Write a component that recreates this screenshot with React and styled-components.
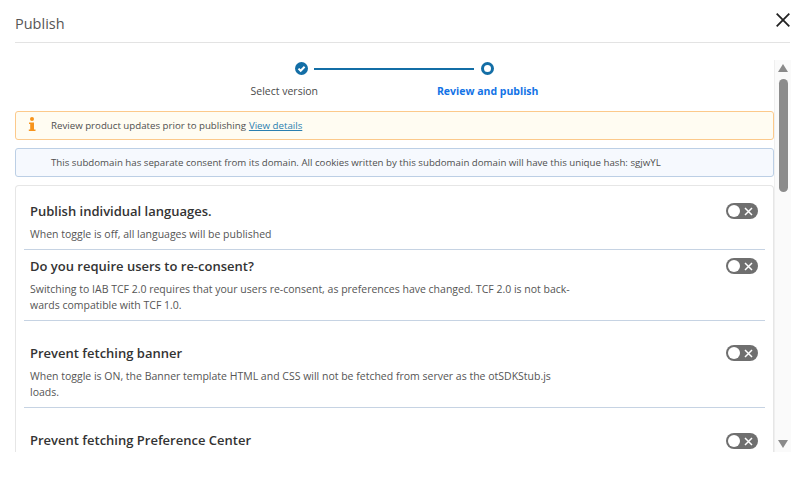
import React from "react";
import styled, { createGlobalStyle } from "styled-components";

const GlobalStyle = createGlobalStyle`
  html, body {
    margin: 0;
    padding: 0;
    background: #fff;
    font-family: "Open Sans", "Noto Sans", sans-serif;
    color: #4a4a4a;
  }
`;

const Modal = styled.div`
  width: 800px;
  height: 482px;
  box-sizing: border-box;
  padding: 0 10px 30px 15px;
  overflow: hidden;
`;

const Header = styled.header`
  height: 42px;
  display: flex;
  align-items: center;
  justify-content: space-between;
  border-bottom: 1px solid #e3e3e3;
`;

const Title = styled.h1`
  margin: 5px 0 0;
  font-size: 14.5px;
  font-weight: 400;
  color: #565656;
`;

const CloseButton = styled.button`
  border: 0;
  background: none;
  padding: 0;
  margin: 0 0 2px;
  width: 14px;
  height: 14px;
  display: block;
  color: #222;

  svg {
    display: block;
  }
`;

const Body = styled.div`
  display: flex;
  height: 409px;
`;

const Content = styled.div`
  width: 759px;
  flex: none;
  overflow: hidden;
`;

const Stepper = styled.div`
  height: 68px;
  display: flex;
  flex-direction: column;
  align-items: center;
`;

const Track = styled.div`
  display: flex;
  align-items: center;
  gap: 6.5px;
  margin: 19px 1px 0 0;
`;

const Dot = styled.span`
  width: 13px;
  height: 13px;
  flex: none;
  border-radius: 50%;
  box-sizing: border-box;
  display: block;
  background: ${(p) => (p.$done ? "#136ea6" : "#fff")};
  border: ${(p) => (p.$done ? "0" : "3px solid #136ea6")};

  svg {
    display: block;
  }
`;

const Line = styled.span`
  width: 160px;
  height: 2px;
  background: #136ea6;
`;

const StepLabels = styled.div`
  display: flex;
  width: 288px;
  justify-content: space-between;
  margin: 9px 0 0;
`;

const StepLabel = styled.span`
  font-size: 10.5px;
  line-height: 15px;
  font-weight: ${(p) => (p.$active ? 700 : 400)};
  color: ${(p) => (p.$active ? "#1273e6" : "#4a4a4a")};
`;

const Banner = styled.div`
  height: 29px;
  box-sizing: border-box;
  margin-bottom: 8px;
  border-radius: 3px;
  display: flex;
  align-items: center;
  position: relative;
  padding-left: 35px;
  font-size: 9.7px;
  color: #4f4f4f;
  border: 1px solid ${(p) => (p.$tone === "warn" ? "#fcc98b" : "#bccfe5")};
  background: ${(p) => (p.$tone === "warn" ? "#fffcf2" : "#f6f9fe")};
`;

const InfoIcon = styled.svg`
  position: absolute;
  left: 12px;
  top: 5px;
`;

const DetailsLink = styled.a`
  color: #2b7fb0;
  text-decoration: underline;
  margin-left: 3px;
`;

const Card = styled.section`
  border: 1px solid #e6e6e6;
  border-bottom: 0;
  border-radius: 4px 4px 0 0;
  padding: 0 8px;
  width: 759px;
  box-sizing: border-box;
  height: 267px;
  overflow: hidden;
`;

const Row = styled.div`
  display: flex;
  justify-content: space-between;
  align-items: flex-start;
  box-sizing: border-box;
  height: ${(p) => p.$height}px;
  padding: ${(p) => p.$top}px 7px 0 6px;
  border-bottom: ${(p) => (p.$last ? "0" : "1px solid #c6d3e3")};
`;

const RowText = styled.div`
  width: 545px;
`;

const RowTitle = styled.h2`
  margin: 0;
  font-size: 13px;
  line-height: 18px;
  font-weight: 600;
  color: #333;
`;

const RowDesc = styled.p`
  margin: 6px 0 0;
  font-size: 10.5px;
  line-height: 16px;
  color: #555;
`;

const Toggle = styled.span`
  width: 32px;
  height: 16px;
  flex: none;
  border-radius: 8px;
  background: #6f6f6f;
  display: flex;
  align-items: center;
  justify-content: space-between;
  padding: 0 5px 0 2px;
  box-sizing: border-box;
  margin-top: ${(p) => (p.$low ? "2px" : "1px")};
`;

const Knob = styled.span`
  width: 12px;
  height: 12px;
  border-radius: 50%;
  background: #fff;
`;

const Rail = styled.div`
  width: 17px;
  flex: none;
  box-sizing: border-box;
  margin-top: 17px;
  background: #fafafa;
  border-left: 1px solid #efefef;
  display: flex;
  flex-direction: column;
  align-items: center;
`;

const Arrow = styled.span`
  width: 0;
  height: 0;
  margin-top: ${(p) => (p.$down ? "auto" : "4px")};
  margin-bottom: ${(p) => (p.$down ? "4px" : "0")};
  border-left: 5.5px solid transparent;
  border-right: 5.5px solid transparent;
  border-bottom: ${(p) => (p.$down ? "0" : "8px solid #8a8a8a")};
  border-top: ${(p) => (p.$down ? "8px solid #8a8a8a" : "0")};
`;

const Thumb = styled.span`
  width: 9px;
  height: 113px;
  margin-top: 7px;
  border-radius: 5px;
  background: #8c8c8c;
`;

const rows = [
  {
    title: "Publish individual languages.",
    desc: "When toggle is off, all languages will be published",
    height: 64,
    top: 16,
  },
  {
    title: "Do you require users to re-consent?",
    desc: "Switching to IAB TCF 2.0 requires that your users re-consent, as preferences have changed. TCF 2.0 is not back-wards compatible with TCF 1.0.",
    height: 71,
    top: 7,
  },
  {
    title: "Prevent fetching banner",
    desc: "When toggle is ON, the Banner template HTML and CSS will not be fetched from server as the otSDKStub.js loads.",
    height: 87,
    top: 23,
  },
  {
    title: "Prevent fetching Preference Center",
    desc: "",
    height: 60,
    top: 23,
    last: true,
  },
];

const SmallX = () => (
  <svg width="9" height="9" viewBox="0 0 9 9" fill="none" stroke="#fff" strokeWidth="1.5">
    <path d="M1 1l7 7M8 1L1 8" />
  </svg>
);

const Check = () => (
  <svg width="13" height="13" viewBox="0 0 13 13" fill="none" stroke="#fff" strokeWidth="2">
    <path d="M3.5 6.6l2.2 2.2 3.9-4" />
  </svg>
);

export default function App() {
  return (
    <>
      <GlobalStyle />
      <Modal>
        <Header>
          <Title>Publish</Title>
          <CloseButton aria-label="Close">
            <svg width="14" height="14" viewBox="0 0 14 14" fill="none" stroke="currentColor" strokeWidth="1.8">
              <path d="M.7.7l12.6 12.6M13.3.7L.7 13.3" />
            </svg>
          </CloseButton>
        </Header>
        <Body>
          <Content>
            <Stepper>
              <Track>
                <Dot $done>
                  <Check />
                </Dot>
                <Line />
                <Dot />
              </Track>
              <StepLabels>
                <StepLabel>Select version</StepLabel>
                <StepLabel $active>Review and publish</StepLabel>
              </StepLabels>
            </Stepper>
            <Banner $tone="warn">
              <InfoIcon width="8" height="15" viewBox="0 0 8 15" fill="#f7941d">
                <circle cx="4" cy="2" r="2" />
                <path d="M1 5.5h5v7h1.5V14H.8v-1.5H2.2V7H1z" />
              </InfoIcon>
              Review product updates prior to publishing
              <DetailsLink href="#">View details</DetailsLink>
            </Banner>
            <Banner>
              This subdomain has separate consent from its domain. All cookies written by this subdomain domain will have this unique hash: sgjwYL
            </Banner>
            <Card>
              {rows.map((r) => (
                <Row key={r.title} $height={r.height} $top={r.top} $last={r.last}>
                  <RowText>
                    <RowTitle>{r.title}</RowTitle>
                    {r.desc && <RowDesc>{r.desc}</RowDesc>}
                  </RowText>
                  <Toggle $low={r.last}>
                    <Knob />
                    <SmallX />
                  </Toggle>
                </Row>
              ))}
            </Card>
          </Content>
          <Rail>
            <Arrow />
            <Thumb />
            <Arrow $down />
          </Rail>
        </Body>
      </Modal>
    </>
  );
}
